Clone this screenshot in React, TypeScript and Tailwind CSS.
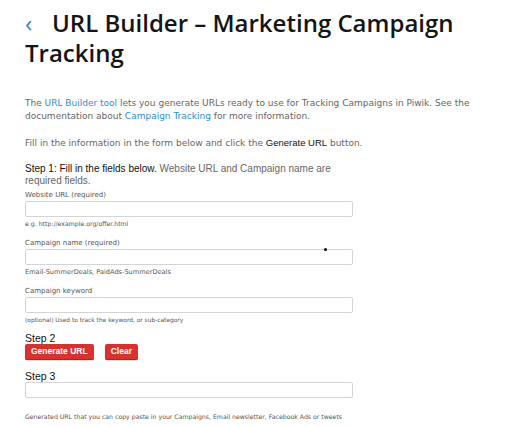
import React from 'react'

const Field: React.FC<{ label: string; help: string; helpSize?: string; dot?: boolean }> = ({ label, help, helpSize, dot }) => (
  <div className="mt-[10px] first:mt-[3px]">
    <div className="text-[7px] leading-[10px] text-[#555]">{label}</div>
    <div className="relative mt-[1px] h-[16px] w-[328px] rounded-[2px] border border-[#d4d4d4] bg-white">
      {dot && <span className="absolute left-[298px] top-[-2px] h-[3px] w-[3px] rounded-full bg-black" />}
    </div>
    <div className={`mt-[3px] leading-[8px] text-[#555] ${helpSize ?? 'text-[6.2px]'}`}>{help}</div>
  </div>
)

const App: React.FC = () => {
  return (
    <div className="min-h-[427px] bg-white pl-[25px] pt-[8px] font-['DejaVu_Sans',sans-serif]">
      {/* Title */}
      <h1 className="font-['Open_Sans',sans-serif] text-[24px] font-semibold leading-[30px] text-[#151515]">
        <span className="inline-block w-[27px] font-normal text-[#1e88e5]">&lsaquo;</span>
        URL Builder – Marketing Campaign Tracking
      </h1>

      {/* Intro */}
      <div className="mt-[29px] w-[450px] text-[9px] leading-[13px] text-[#666]">
        <p>
          The <a className="text-[#2d8ed6]">URL Builder tool</a> lets you generate URLs ready to use for Tracking Campaigns in Piwik. See the
          documentation about <a className="text-[#2d8ed6]">Campaign Tracking</a> for more information.
        </p>
        <p className="mt-[13px]">
          Fill in the information in the form below and click the{' '}
          <span className="font-['Liberation_Sans',sans-serif] text-[9.5px] text-[#111]">Generate URL</span> button.
        </p>
      </div>

      {/* Step 1 */}
      <div className="mt-[13px] w-[315px] font-['Liberation_Sans',sans-serif] text-[10px] leading-[12px] text-[#666]">
        <span className="text-[#111]">Step 1: Fill in the fields below.</span> Website URL and Campaign name are required fields.
      </div>
      <div>
        <Field label="Website URL (required)" help="e.g. http://example.org/offer.html" />
        <Field label="Campaign name (required)" help="Email-SummerDeals, PaidAds-SummerDeals" helpSize="text-[6.6px]" dot />
        <Field label="Campaign keyword" help="(optional) Used to track the keyword, or sub-category" helpSize="text-[5.9px]" />
      </div>

      {/* Step 2 */}
      <div className="mt-[8px] font-['Liberation_Sans',sans-serif] text-[10.5px] leading-[12px] text-[#111]">Step 2</div>
      <div className="flex gap-[11px] font-['Liberation_Sans',sans-serif]">
        <button className="h-[16px] rounded-[2px] border-b border-[#b52320] bg-[#d8322e] px-[6px] text-[8.5px] font-bold text-white shadow-[0_1px_1px_rgba(0,0,0,0.15)]">
          Generate URL
        </button>
        <button className="h-[16px] rounded-[2px] border-b border-[#b52320] bg-[#d8322e] px-[6px] text-[8.5px] font-bold text-white shadow-[0_1px_1px_rgba(0,0,0,0.15)]">
          Clear
        </button>
      </div>

      {/* Step 3 */}
      <div className="mt-[10px] font-['Liberation_Sans',sans-serif] text-[10.5px] leading-[12px] text-[#111]">Step 3</div>
      <div className="h-[16px] w-[328px] rounded-[2px] border border-[#d4d4d4] bg-white" />
      <div className="mt-[15px] text-[6.2px] leading-[8px] text-[#555]">
        Generated URL that you can copy paste in your Campaigns, Email newsletter, Facebook Ads or tweets
      </div>
    </div>
  )
}

export default App
